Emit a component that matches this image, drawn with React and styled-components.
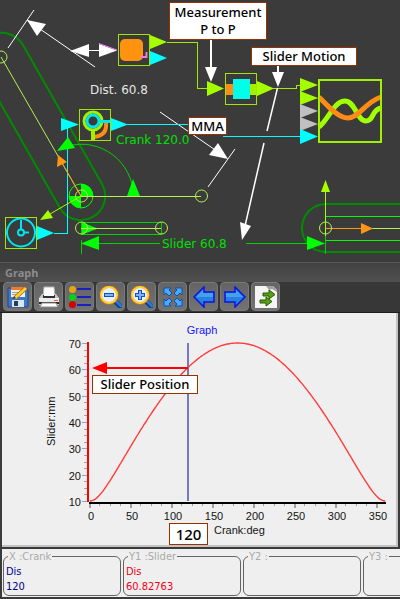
import styled, { createGlobalStyle } from "styled-components";

const LIME = "#a6ff00";
const CYAN = "#00ffff";
const GREEN = "#00ff00";
const RAIL = "#00d200";
const DARK_GREEN = "#008c00";
const PALE = "#b4f050";
const ORANGE = "#ff9614";

const CRANK = 30;
const GROUND = 40;
const CURRENT_ANGLE = 120;

const distance = (deg) =>
  Math.sqrt(
    CRANK ** 2 + GROUND ** 2 - 2 * CRANK * GROUND * Math.cos((deg * Math.PI) / 180)
  );

const readouts = [
  { title: "X :Crank", kind: "Dis", value: "120", color: "#00008c" },
  { title: "Y1 :Slider", kind: "Dis", value: "60.82763", color: "#f00014" },
  { title: "Y2 :" },
  { title: "Y3 :" },
];

const App = () => (
  <>
    <GlobalStyle />
    <Window>
      <Canvas>
        <Mechanism />
        <Callout $left={169} $top={2} $width={98} $height={38}>
          Measurement
          <br />P to P
        </Callout>
        <Callout $left={251} $top={47} $width={106} $height={19}>
          Slider Motion
        </Callout>
        <Callout $left={188} $top={117} $width={39} $height={18}>
          MMA
        </Callout>
      </Canvas>
      <TitleBar>Graph</TitleBar>
      <Toolbar />
      <Plot>
        <Chart />
        <Callout $left={90} $top={62} $width={106} $height={19}>
          Slider Position
        </Callout>
        <Callout $left={167} $top={210} $width={39} $height={22} $large>
          120
        </Callout>
      </Plot>
      <Readouts>
        {readouts.map(({ title, kind, value, color }) => (
          <Readout key={title} $color={color}>
            <legend>{title}</legend>
            <div>{kind}</div>
            <div>{value}</div>
          </Readout>
        ))}
      </Readouts>
    </Window>
  </>
);

export default App;

const Mechanism = () => (
  <Drawing height="262">
    {/* crank outline and dimension arc */}
    <g fill="none" stroke={DARK_GREEN} strokeWidth="2">
      <path d="M-19 69L60 208A24 24 0 0 0 102 184L23 45A24 24 0 0 0 -19 69" />
      <path d="M326 204A24 24 0 0 0 326 252" />
    </g>
    <g fill="none" stroke={RAIL}>
      <path d="M62 148A52 52 0 0 1 133 190" />
    </g>

    {/* distance measurement */}
    <g stroke="#fff" fill="none">
      <path d="M34 10L8 48M27 20L95 67M160 112L224 156M235 149L208 187" />
      <path d="M80 50.5H108" />
    </g>
    <g fill="#fff">
      <path d="M27 20L46 24L37 36Z" />
      <path d="M70 51L89 44V57Z" />
      <path d="M99 44V57L117 50.5Z" />
      <path d="M228 159L218 143L209 155Z" />
    </g>
    <path d="M99 43.5L117 50" stroke="#ff78ff" fill="none" />

    {/* wires between the function blocks */}
    <g fill="none" shapeRendering="crispEdges">
      <path
        d="M167 42.5H197.5V88.5H208M272 88.5H296.5V85.5H301"
        stroke="#a0eb00"
      />
      <path d="M54 233.5H67.5V125" stroke={CYAN} />
      <path d="M127 124.5H192M223 136.5H301" stroke={CYAN} />
    </g>

    {/* point to point block */}
    <Node x="118.5" y="34.5" width="31" height="31" />
    <rect x="120" y="39" width="23" height="22" rx="5" fill="#ff920f" />
    <path d="M141 57H146.5V52" fill="none" stroke="#f078f0" strokeWidth="2" />
    <path d="M150 35V49L167 42Z" fill={LIME} />
    <path d="M150 51V65L167 58Z" fill={CYAN} />

    {/* measurement block */}
    <path d="M207 81V96L224 88.5Z" fill={LIME} />
    <rect x="226" y="84" width="8" height="11" fill="#ff8c14" />
    <rect x="250" y="84" width="7" height="11" fill="#a0f000" />
    <rect x="233" y="79" width="17" height="20" fill="#00ffeb" />
    <Node x="225.5" y="73.5" width="31" height="31" />
    <path d="M257 81V96L274 88.5Z" fill={LIME} />

    {/* graph block */}
    <path d="M300 78V92L318 85ZM300 91V105L318 98Z" fill={LIME} />
    <path d="M300 104V118L318 111ZM300 117V131L318 124Z" fill="#c0c0c0" />
    <path d="M300 129V144L318 136.5Z" fill={CYAN} />
    <g fill="none" strokeWidth="5">
      <path
        d="M319 127C329 119 334 101 345 101C355 101 357 121 366 121C374 121 371 110 381 108"
        stroke="#a0ff00"
      />
      <path
        d="M319 97C328 106 338 118 348 118C359 118 364 103 381 97"
        stroke="#ff8c14"
      />
    </g>
    <rect
      x="319"
      y="80"
      width="62"
      height="62"
      fill="none"
      stroke="#a0f000"
      strokeWidth="2"
    />

    {/* motion block */}
    <path d="M61 118V131L79 124.5Z" fill={CYAN} />
    <path
      d="M106 123C107 132 102 136 94 137"
      fill="none"
      stroke="#ff8c14"
      strokeWidth="4"
    />
    <circle cx="93" cy="121" r="9" fill="none" stroke="#a0f000" strokeWidth="3" />
    <path d="M93 130V140" stroke="#a0f000" strokeWidth="4" />
    <circle cx="93" cy="121" r="6" fill="none" stroke="#00e6eb" strokeWidth="3" />
    <path d="M99 121.5H111" stroke="#00e6eb" strokeWidth="3" />
    <Node x="79.5" y="109.5" width="31" height="31" />
    <path d="M111 118V131L128 124.5Z" fill={CYAN} />

    {/* clock input */}
    <g fill="none" stroke="#00e6f0" strokeWidth="2">
      <circle cx="21" cy="232.5" r="14" />
      <circle cx="21" cy="232.5" r="3" />
      <path d="M21 229V220M24 232.5H29" />
    </g>
    <Node x="5.5" y="217.5" width="31" height="31" />
    <path d="M37 226V240L54 233Z" fill={CYAN} />

    {/* crank pivot */}
    <path d="M81 196V184A12 12 0 0 1 93 196ZM81 196V208A12 12 0 0 1 69 196Z" fill={GREEN} />
    <circle cx="81" cy="196" r="12" fill="none" stroke={GREEN} />
    <g fill="none" stroke={PALE}>
      <path d="M1 57L81 196" />
      <path d="M81 196.5H201" shapeRendering="crispEdges" />
      <circle cx="1" cy="57" r="6" />
      <circle cx="81.5" cy="196" r="6" />
      <circle cx="201.5" cy="196" r="6" />
    </g>
    <path d="M81 196L62 163" stroke={ORANGE} />
    <path d="M58 155L57 167L67 162Z" fill={ORANGE} />
    <path d="M81 196L50 214" stroke={LIME} />
    <path d="M40 220L48 210L53 218Z" fill={LIME} />
    <path d="M57 151L68 137L75 148ZM133 179L127 196H140Z" fill={GREEN} />

    {/* slider and its dimension */}
    <path d="M81 222V235L98 228.5Z" fill={GREEN} />
    <g fill="none" stroke={RAIL} shapeRendering="crispEdges">
      <rect x="81.5" y="222.5" width="80" height="12" />
      <path d="M81.5 240V254M98 243.5H160M246 243.5H308" />
    </g>
    <path d="M81 228.5H161" stroke={PALE} shapeRendering="crispEdges" />
    <circle cx="81.5" cy="228" r="6" fill="none" stroke={PALE} />
    <circle cx="161.5" cy="228" r="6" fill="none" stroke={PALE} />
    <path d="M81 243.5L99 236V250Z" fill={GREEN} />
    <path d="M307 236V250L325 243.5Z" fill={GREEN} />

    {/* slide rail, runs off the right side */}
    <g shapeRendering="crispEdges">
      <rect x="325" y="203" width="100%" height="2" fill={DARK_GREEN} />
      <rect x="325" y="251" width="100%" height="2" fill={DARK_GREEN} />
      <rect x="325" y="216" width="100%" height="1" fill={GREEN} />
      <rect x="325" y="240" width="100%" height="1" fill={GREEN} />
      <rect x="372" y="228" width="100%" height="1" fill={PALE} />
      <path d="M325 228.5H362" stroke={ORANGE} />
      <path d="M325.5 191V236" stroke={LIME} />
      <path d="M325.5 236V254" stroke={RAIL} />
    </g>
    <path d="M325.5 180L321 192H330Z" fill={LIME} />
    <path d="M361 223V234L373 228.5Z" fill={ORANGE} />
    <circle cx="325.5" cy="228" r="6" fill="none" stroke={PALE} />

    <Dimension x="90" y="94" fill="#e6e6e6">
      Dist. 60.8
    </Dimension>
    <Dimension x="116" y="144">
      Crank 120.0
    </Dimension>
    <Dimension x="162" y="248">
      Slider 60.8
    </Dimension>

    {/* callout leaders */}
    <g stroke="#fff" strokeWidth="2">
      <path d="M211 40V68M278 66V74" />
      <path d="M277.5 88L267 131M264 143L245 226" strokeWidth="1.5" />
    </g>
    <g fill="#fff">
      <path d="M205 67H217L211 82ZM272 72H284L278 87Z" />
      <path d="M240 222L251 226L242 240Z" />
    </g>
  </Drawing>
);

const Node = (props) => (
  <rect {...props} fill="none" stroke="#a0e600" shapeRendering="crispEdges" />
);

const xOf = (deg) => 88 + (deg * 41) / 50;
const yOf = (mm) => 188 - ((mm - 10) * 158) / 60;

const Chart = () => {
  const curve = Array.from(
    { length: 181 },
    (_, i) => `${xOf(i * 2).toFixed(1)},${yOf(distance(i * 2)).toFixed(1)}`
  ).join(" ");
  const xTicks = Array.from({ length: 29 }, (_, i) => i * 12.5);
  const yTicks = Array.from({ length: 25 }, (_, i) => 10 + i * 2.5);
  const marker = Math.round(xOf(CURRENT_ANGLE)) - 1;

  return (
    <Drawing height="232">
      <g fill="#a0a0a0" shapeRendering="crispEdges">
        {xTicks.map((t) => (
          <rect
            key={t}
            x={Math.round(xOf(t)) - 1}
            y="191"
            width={t % 50 ? 1 : 2}
            height={t % 50 ? 2 : 4}
          />
        ))}
        {yTicks.map((t) => (
          <rect
            key={t}
            x={t % 10 ? 82 : 80}
            y={Math.round(yOf(t))}
            width={t % 10 ? 3 : 5}
            height="1"
          />
        ))}
      </g>
      <rect x={marker} y="30" width="2" height="158" fill="#7878be" />
      <polyline points={curve} fill="none" stroke="#ff3c3c" strokeWidth="1.4" />
      <rect x="85" y="29" width="2" height="160" fill="#ff0000" />
      <rect x="87" y="189" width="297" height="2" fill="#000" />

      {[0, 50, 100, 150, 200, 250, 300, 350].map((t) => (
        <AxisText key={t} x={xOf(t) + 1} y="207" textAnchor="middle">
          {t}
        </AxisText>
      ))}
      {[10, 20, 30, 40, 50, 60, 70].map((t) => (
        <AxisText key={t} x="79" y={Math.round(yOf(t)) + 5} textAnchor="end">
          {t}
        </AxisText>
      ))}
      <AxisText x="200" y="21" textAnchor="middle" fill="#1414ff">
        Graph
      </AxisText>
      <AxisText x="212" y="221">
        Crank:deg
      </AxisText>
      <AxisText transform="translate(53 133) rotate(-90)">Slider:mm</AxisText>

      <path d="M104 55H186" stroke="#ff0000" strokeWidth="2" />
      <path d="M90 55L105 49V61Z" fill="#ff0000" />
    </Drawing>
  );
};

const Toolbar = () => (
  <Tools>
    <Tool aria-label="Save">
      <svg viewBox="0 0 22 22">
        <path d="M1 2H19L21 4V21H1Z" fill="#3c78c8" stroke="#1e468c" />
        <rect x="4" y="2" width="14" height="9" fill="#f5f0eb" />
        <rect x="4" y="1" width="14" height="3" fill="#ff7828" />
        <path d="M5 6.5H16M5 8.5H15" stroke="#a0a0a0" />
        <rect x="5" y="14" width="12" height="7" fill="#d7e6f5" />
        <rect x="7" y="15" width="4" height="5" fill="#283c5a" />
        <path d="M8 12L19 2" stroke="#a05a00" strokeWidth="4" />
        <path d="M8 12L19 2" stroke="#ffd228" strokeWidth="3" />
        <path d="M6 13L9 12L7 10Z" fill="#503c28" />
      </svg>
    </Tool>
    <Tool aria-label="Print">
      <svg viewBox="0 0 22 22">
        <path d="M6 1H16L17 10H5Z" fill="#fafafa" stroke="#b4b4b4" />
        <path d="M4 8H18L21 12V19H1V12Z" fill="#c8c8c8" />
        <path d="M5 9H17V12H5Z" fill="#323232" />
        <path d="M6 8H16V10H6Z" fill="#fafafa" />
        <rect x="1" y="12" width="20" height="4" fill="#ebebeb" />
        <rect x="16" y="14" width="4" height="1" fill="#ff6414" />
        <rect x="1" y="16" width="20" height="2" fill="#282828" />
        <path d="M4 17H18L20 21H2Z" fill="#fff" stroke="#8c8c8c" />
      </svg>
    </Tool>
    <Tool aria-label="Series">
      <svg viewBox="0 0 22 22">
        <path d="M0 3H6M0 11H6M0 19H6" stroke="#323232" />
        <path d="M8 3H22M8 11H22M8 19H22" stroke="#1e1ebe" strokeWidth="2" />
        <circle cx="3.5" cy="3.5" r="3.5" fill="#e6a514" />
        <circle cx="3.5" cy="11.5" r="3.5" fill="#00d21e" />
        <circle cx="3.5" cy="18.5" r="3.5" fill="#d70000" />
      </svg>
    </Tool>
    <Tool aria-label="Zoom out">
      <Magnifier />
    </Tool>
    <Tool aria-label="Zoom in">
      <Magnifier plus />
    </Tool>
    <Tool aria-label="Zoom to fit">
      <svg viewBox="0 0 22 22">
        {[0, 90, 180, 270].map((turn) => (
          <path
            key={turn}
            d="M2 2H9L7 4L10 7L7 10L4 7L2 9Z"
            fill="#46aaff"
            stroke="#1450aa"
            transform={`rotate(${turn} 11 11)`}
          />
        ))}
      </svg>
    </Tool>
    <Tool aria-label="Previous">
      <ArrowIcon />
    </Tool>
    <Tool aria-label="Next">
      <ArrowIcon right />
    </Tool>
    <Tool aria-label="Export">
      <svg viewBox="0 0 22 22">
        <path d="M0 0H18L22 4V22H0Z" fill="#f5f5f5" />
        <path d="M11 0L14 4L17 3L22 6V4L18 0Z" fill="#a0a0a0" />
        <g fill="#5aa014" stroke="#235a00">
          <path d="M8 7H14V4L20 8.5L14 13V10H8Z" />
          <path d="M5 14H11V11L17 15.5L11 20V17H5Z" />
        </g>
      </svg>
    </Tool>
  </Tools>
);

const Magnifier = ({ plus }) => (
  <svg viewBox="0 0 22 22">
    <path d="M15 15L21 21" stroke="#0a3c8c" strokeWidth="5" strokeLinecap="round" />
    <path d="M16 15L21 20" stroke="#2878dc" strokeWidth="3" strokeLinecap="round" />
    <circle cx="9" cy="9" r="8.5" fill="#e6f0ff" stroke="#d27800" strokeWidth="2.5" />
    <circle cx="9" cy="9" r="8" fill="none" stroke="#ffd23c" strokeWidth="2" />
    <path d="M4 9H14" stroke="#1e50aa" strokeWidth="4" />
    {plus && <path d="M9 4V14" stroke="#1e50aa" strokeWidth="4" />}
    <path d="M5 9H13" stroke="#78b4ff" strokeWidth="2" />
    {plus && <path d="M9 5V13" stroke="#78b4ff" strokeWidth="2" />}
  </svg>
);

const ArrowIcon = ({ right }) => (
  <svg viewBox="0 0 22 22">
    <path
      d="M1 11L11 1V6H21V16H11V21Z"
      fill="#2882dc"
      stroke="#0a14e6"
      strokeWidth="1.5"
      transform={right ? "rotate(180 11 11)" : undefined}
    />
    <path
      d="M3 11L10 4V7H20V11Z"
      fill="#46a0f0"
      transform={right ? "translate(22 0) scale(-1 1)" : undefined}
    />
  </svg>
);

const GlobalStyle = createGlobalStyle`
  * {
    box-sizing: border-box;
  }

  body {
    margin: 0;
    background-color: #3b3b3b;
  }
`;

const Window = styled.main`
  display: flex;
  flex-direction: column;
  overflow: hidden;
  background-color: #3b3b3b;
  font-family: "DejaVu Sans Condensed", "DejaVu Sans", sans-serif;
`;

const Canvas = styled.section`
  position: relative;
  height: 262px;
`;

const Drawing = styled.svg`
  display: block;
  width: 100%;
`;

const Dimension = styled.text`
  font: 12px "DejaVu Sans", sans-serif;
  fill: ${({ fill }) => fill || "#00e100"};
`;

const AxisText = styled.text`
  font: 11px "Liberation Sans", sans-serif;
  fill: ${({ fill }) => fill || "#141414"};
`;

const Callout = styled.div`
  position: absolute;
  left: ${({ $left }) => $left}px;
  top: ${({ $top }) => $top}px;
  width: ${({ $width }) => $width}px;
  height: ${({ $height }) => $height}px;
  display: flex;
  align-items: center;
  justify-content: center;
  text-align: center;
  white-space: nowrap;
  border: 1px solid #963200;
  background-color: #fff;
  color: #000;
  font-family: "Noto Sans", "Open Sans", sans-serif;
  font-size: ${({ $large }) => ($large ? 15 : 13)}px;
  font-weight: 500;
  line-height: 17px;
`;

const TitleBar = styled.h1`
  margin: 0;
  padding-left: 5px;
  height: 20px;
  border-top: 1px solid #5a5a5a;
  background: linear-gradient(#424242, #505050);
  color: #8c8c8c;
  font: bold 11px/19px "Noto Sans", sans-serif;
`;

const Tools = styled.nav`
  display: flex;
  gap: 2px;
  padding: 0 3px 1px;
  border-bottom: 1px solid #1e1e1e;
  background-color: #373737;
`;

const Tool = styled.button`
  display: grid;
  place-items: center;
  width: 29px;
  height: 29px;
  padding: 0;
  border: 1px solid #7a7a7a;
  border-radius: 4px;
  background: linear-gradient(#646464, #737373);

  svg {
    width: 22px;
    height: 22px;
  }
`;

const Plot = styled.section`
  position: relative;
  margin: 0 2px;
  border-right: 2px solid #c3c3c3;
  border-bottom: 2px solid #c3c3c3;
  background-color: #efefef;
`;

const Readouts = styled.section`
  display: flex;
  gap: 2px;
  margin: 2px 0 2px 2px;
  padding: 1px;
  overflow: hidden;
  background-color: #efefef;
`;

const Readout = styled.fieldset`
  flex: 0 0 118px;
  height: 46px;
  min-width: 0;
  margin: 0;
  padding: 1px 3px 0 2px;
  border: 1px solid #646464;
  border-radius: 6px;
  color: ${({ $color }) => $color};
  font-size: 11px;
  line-height: 15px;

  legend {
    margin-left: 2px;
    padding: 0 1px;
    line-height: 13px;
    color: #aaa;
  }
`;
